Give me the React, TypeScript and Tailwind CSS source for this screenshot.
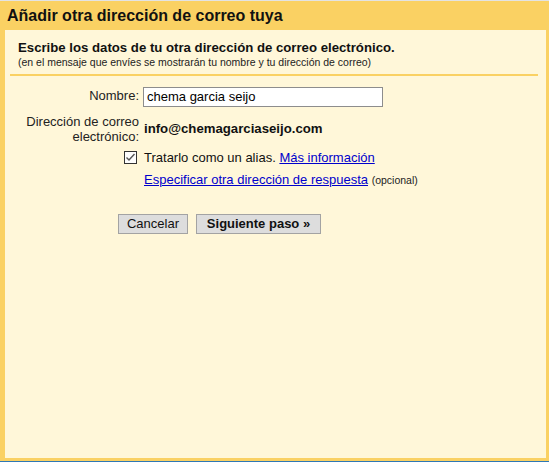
import React from "react";

const font = { fontFamily: '"Liberation Sans", Arial, sans-serif' };

export default function App() {
  return (
    <div
      className="w-[549px] h-[462px] flex flex-col bg-[#fad163] border-t border-t-[#e3e3e3] border-b border-b-[#2f78b5] text-black"
      style={font}
    >
      <div className="h-[29px] flex items-center pl-[7px] pt-[1px] text-[16px] font-bold leading-none text-[#111]">
        Añadir otra dirección de correo tuya
      </div>
      <div className="flex-1 ml-[5px] mr-[3px] mb-[3px] bg-[#fff7d9] flex flex-col">
        <div className="pt-[10px] pl-[13px]">
          <div className="text-[13.2px] font-bold leading-[16px] text-[#111]">
            Escribe los datos de tu otra dirección de correo electrónico.
          </div>
          <div className="text-[10.5px] leading-[12px] text-[#222]">
            (en el mensaje que envíes se mostrarán tu nombre y tu dirección de correo)
          </div>
        </div>
        <div className="mt-[6px] ml-[5px] mr-[8px] h-[2px] bg-[#fad163]" />

        <div className="mt-[11px] flex flex-col text-[13px]">
          <div className="flex items-start gap-[4px]">
            <label className="w-[134px] text-right leading-[15px] pt-[1px] text-[#222]">Nombre:</label>
            <div className="w-[240px] h-[20px] border border-[#8d8d8d] bg-white flex items-center pl-[3px] text-[13px] text-black">
              chema garcia seijo
            </div>
          </div>

          <div className="mt-[7px] flex items-center gap-[5px]">
            <div className="w-[134px] text-right leading-[15px] text-[#222]">
              Dirección de correo
              <br />
              electrónico:
            </div>
            <div className="font-bold text-[13.2px] text-[#111]">info@chemagarciaseijo.com</div>
          </div>

          <div className="mt-[4px] flex items-center">
            <div className="w-[119px]" />
            <span className="w-[13px] h-[13px] border border-[#333] bg-[#fdfdfd] flex items-center justify-center">
              <svg width="11" height="11" viewBox="0 0 11 11" fill="none">
                <path d="M1.5 5.5 L4 8 L9.5 2" stroke="#555" strokeWidth="1.4" />
              </svg>
            </span>
            <span className="ml-[7px] text-[13px] text-[#111]">
              Tratarlo como un alias.{" "}
              <a href="#" className="text-[#0000cc] underline">Más información</a>
            </span>
          </div>

          <div className="mt-[4px] pl-[139px] text-[13px] leading-[16px]">
            <a href="#" className="text-[#0000cc] underline">Especificar otra dirección de respuesta</a>{" "}
            <span className="text-[10.5px] text-[#222]">(opcional)</span>
          </div>

          <div className="mt-[26px] pl-[113px] flex gap-[8px]">
            <button className="w-[70px] h-[20px] bg-[#dddddd] border border-[#a3a3a3] text-[13px] leading-none text-[#111]">
              Cancelar
            </button>
            <button className="w-[125px] h-[20px] bg-[#dddddd] border border-[#a3a3a3] text-[13px] font-bold leading-none text-[#111]">
              Siguiente paso »
            </button>
          </div>
        </div>
      </div>
    </div>
  );
}
